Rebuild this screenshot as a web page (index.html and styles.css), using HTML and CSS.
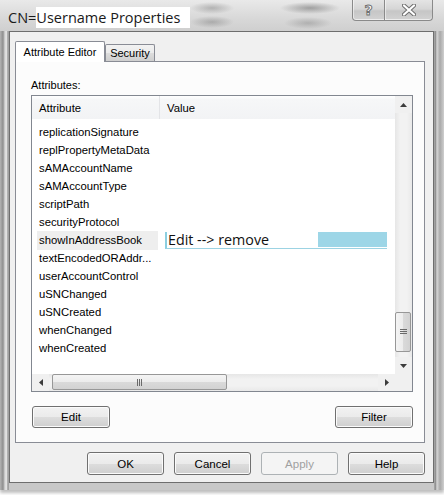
FILE: index.html
```html
<!DOCTYPE html>
<html>
<head>
<meta charset="utf-8">
<link rel="stylesheet" href="styles.css">
</head>
<body>
<div class="window">
  <div class="titlebar">
    <div class="title">CN=<span class="mask">Username Properties</span></div>
    <div class="caption">
      <div class="cbtn help"><span class="qmark">?</span></div>
      <div class="cbtn close">
        <svg width="14" height="12" viewBox="0 0 14 12"><path d="M2 1.5 L12 10.5 M12 1.5 L2 10.5" stroke="#6f6f6f" stroke-width="4.2" stroke-linecap="round"/><path d="M2 1.5 L12 10.5 M12 1.5 L2 10.5" stroke="#ffffff" stroke-width="2.2" stroke-linecap="round"/></svg>
      </div>
    </div>
  </div>
  <div class="client">
    <div class="tabs">
      <div class="tab active">Attribute Editor</div>
      <div class="tab">Security</div>
    </div>
    <div class="panel">
      <div class="label">Attributes:</div>
      <div class="listbox">
        <div class="listmain">
          <div class="cols">
            <div class="header">
              <div class="hcell h1">Attribute</div>
              <div class="hcell h2">Value</div>
            </div>
            <div class="rows">
              <div class="row"><div class="c1">replicationSignature</div></div>
              <div class="row"><div class="c1">replPropertyMetaData</div></div>
              <div class="row"><div class="c1">sAMAccountName</div></div>
              <div class="row"><div class="c1">sAMAccountType</div></div>
              <div class="row"><div class="c1">scriptPath</div></div>
              <div class="row"><div class="c1">securityProtocol</div></div>
              <div class="row"><div class="c1 sel">showInAddressBook</div>
                <div class="editor"><span class="etext">Edit --&gt; remove</span><span class="esel"></span></div>
              </div>
              <div class="row"><div class="c1">textEncodedORAddr...</div></div>
              <div class="row"><div class="c1">userAccountControl</div></div>
              <div class="row"><div class="c1">uSNChanged</div></div>
              <div class="row"><div class="c1">uSNCreated</div></div>
              <div class="row"><div class="c1">whenChanged</div></div>
              <div class="row"><div class="c1">whenCreated</div></div>
            </div>
          </div>
          <div class="vscroll">
            <div class="sbtn"><svg width="7" height="4" viewBox="0 0 7 4"><path d="M3.5 0 L7 4 L0 4 Z" fill="#3c3c3c"/></svg></div>
            <div class="vtrack"><div class="vthumb"><svg width="7" height="6" viewBox="0 0 7 6"><path d="M0 0.5H7M0 2.5H7M0 4.5H7" stroke="#6a6a6a" stroke-width="1"/></svg></div></div>
            <div class="sbtn"><svg width="7" height="4" viewBox="0 0 7 4"><path d="M0 0 L7 0 L3.5 4 Z" fill="#3c3c3c"/></svg></div>
          </div>
        </div>
        <div class="hrow">
          <div class="hscroll">
            <div class="sbtn"><svg width="4" height="7" viewBox="0 0 4 7"><path d="M4 0 L4 7 L0 3.5 Z" fill="#3c3c3c"/></svg></div>
            <div class="htrack"><div class="hthumb"><svg width="6" height="7" viewBox="0 0 6 7"><path d="M0.5 0V7M2.5 0V7M4.5 0V7" stroke="#6a6a6a" stroke-width="1"/></svg></div></div>
            <div class="sbtn"><svg width="4" height="7" viewBox="0 0 4 7"><path d="M0 0 L4 3.5 L0 7 Z" fill="#3c3c3c"/></svg></div>
          </div>
          <div class="corner"></div>
        </div>
      </div>
      <div class="panelbtns">
        <button class="btn">Edit</button>
        <button class="btn">Filter</button>
      </div>
    </div>
    <div class="dlgbtns">
      <button class="btn dbtn">OK</button>
      <button class="btn dbtn">Cancel</button>
      <button class="btn dbtn disabled">Apply</button>
      <button class="btn dbtn">Help</button>
    </div>
  </div>
</div>
</body>
</html>
```

FILE: styles.css
```css
html, body {
  margin: 0;
  padding: 0;
  background: #ffffff;
}

body {
  width: 444px;
  height: 495px;
  overflow: hidden;
  font-family: "Liberation Sans", Arial, sans-serif;
  font-size: 11px;
  color: #000;
}

.window {
  box-sizing: border-box;
  width: 444px;
  height: 490px;
  padding: 0 10px 7px 9px;
  display: flex;
  flex-direction: column;
  background:
    linear-gradient(to right, #b4b4b4 0px, #8e8e8e 3px, #d9d9d9 5px, #e4e4e4 7px, #7a7a7a 8px, #c8c8c8 9px, #c8c8c8 434px, #7c7c7c 435px, #d6d6d6 437px, #a9a9a9 440px, #cfcfcf 444px);
  box-shadow: 0 3px 3px rgba(0,0,0,0.25);
}

.titlebar {
  height: 31px;
  margin: 0 -10px 0 -9px;
  padding: 0 11px 0 8px;
  display: flex;
  align-items: flex-start;
  background:
    radial-gradient(ellipse 22px 6px at 212px 8px, rgba(90,90,90,0.35), rgba(90,90,90,0)),
    radial-gradient(ellipse 22px 6px at 212px 22px, rgba(90,90,90,0.35), rgba(90,90,90,0)),
    radial-gradient(ellipse 30px 6px at 310px 8px, rgba(60,60,60,0.4), rgba(60,60,60,0)),
    radial-gradient(ellipse 24px 6px at 308px 23px, rgba(90,90,90,0.3), rgba(90,90,90,0)),
    linear-gradient(to bottom, #e9e9e9 0%, #d8d8d8 60%, #cfcfcf 100%);
}

.title {
  margin-top: 7px;
  font-family: "Open Sans", "Noto Sans", sans-serif;
  font-size: 14.5px;
  line-height: 21px;
  color: #1a1a1a;
  white-space: nowrap;
}

.mask {
  display: inline-block;
  background: #ffffff;
  padding-right: 10px;
}

.caption {
  margin-left: auto;
  display: flex;
}

.cbtn {
  height: 20px;
  border: 1px solid #8a8a8a;
  border-top: 0;
  display: flex;
  align-items: center;
  justify-content: center;
  background: linear-gradient(to bottom, #e4e4e4 0%, #d6d6d6 45%, #c6c6c6 55%, #d2d2d2 100%);
  box-shadow: inset 0 -1px 0 rgba(255,255,255,0.6), inset 1px 0 0 rgba(255,255,255,0.5);
}

.help {
  width: 31px;
  border-radius: 0 0 0 4px;
}

.close {
  width: 47px;
  border-left: 0;
  border-radius: 0 0 4px 0;
}

.qmark {
  font-family: "DejaVu Sans", sans-serif;
  font-weight: bold;
  font-size: 14px;
  line-height: 14px;
  color: #ffffff;
  -webkit-text-stroke: 1px #707070;
}

.client {
  flex: 1;
  background: #f0f0f0;
  border: 1px solid #6e6e6e;
  padding: 9px 8px 7px 5px;
  display: flex;
  flex-direction: column;
}

.tabs {
  height: 20px;
  display: flex;
  align-items: flex-end;
}

.tab {
  box-sizing: border-box;
  height: 17px;
  width: 50px;
  border: 1px solid #898c95;
  border-bottom: 0;
  border-radius: 2px 2px 0 0;
  background: linear-gradient(to bottom, #f2f2f2 0%, #ebebeb 50%, #dddddd 51%, #cfcfcf 100%);
  display: flex;
  align-items: center;
  justify-content: center;
  font-size: 11px;
  white-space: nowrap;
}

.tab.active {
  width: 90px;
  height: 21px;
  margin-bottom: -1px;
  position: relative;
  z-index: 1;
  background: #ffffff;
}

.panel {
  box-sizing: border-box;
  height: 382px;
  border: 1px solid #898c95;
  background: #fcfcfc;
  padding: 17px 11px 14px 15px;
  display: flex;
  flex-direction: column;
}

.label {
  line-height: 13px;
  margin-bottom: 3px;
}

.listbox {
  height: 295px;
  border: 1px solid #828790;
  background: #ffffff;
  display: flex;
  flex-direction: column;
}

.listmain {
  height: 278px;
  display: flex;
}

.cols {
  flex: 1;
  display: flex;
  flex-direction: column;
}

.header {
  height: 23px;
  display: flex;
  background: linear-gradient(to bottom, #ffffff 0%, #f6f7f8 15%, #f2f3f5 100%);
}

.hcell {
  box-sizing: border-box;
  display: flex;
  align-items: center;
  padding-left: 7px;
  padding-top: 1px;
  font-size: 11.3px;
}

.h1 {
  width: 128px;
  border-right: 1px solid #e3e4e7;
}

.h2 {
  flex: 1;
}

.rows {
  padding-top: 4px;
}

.row {
  height: 18px;
  display: flex;
}

.c1 {
  box-sizing: border-box;
  width: 121px;
  margin-left: 5px;
  padding-left: 2px;
  line-height: 18px;
  font-size: 11.3px;
  white-space: nowrap;
}

.c1.sel {
  background: #eeeeee;
  height: 19px;
  line-height: 19px;
}

.editor {
  box-sizing: border-box;
  margin-left: 7px;
  margin-top: 1px;
  width: 222px;
  height: 17px;
  border-left: 2px solid #8ccfe0;
  border-bottom: 1px solid #9cd3e3;
  display: flex;
  align-items: flex-start;
  padding-left: 1px;
}

.etext {
  font-family: "Open Sans", "Noto Sans", sans-serif;
  font-size: 14.3px;
  line-height: 15px;
  color: #111;
  white-space: nowrap;
}

.esel {
  margin-left: auto;
  width: 69px;
  height: 15px;
  background: #9dd6e7;
}

.vscroll {
  width: 17px;
  display: flex;
  flex-direction: column;
  background: #f0f0f0;
}

.sbtn {
  width: 17px;
  height: 17px;
  display: flex;
  align-items: center;
  justify-content: center;
  flex: none;
}

.vtrack {
  flex: 1;
  background: linear-gradient(to right, #e6e6e6, #f2f2f2 30%, #f2f2f2 70%, #e9e9e9);
}

.vthumb {
  box-sizing: border-box;
  margin-top: 199px;
  width: 16px;
  height: 40px;
  border: 1px solid #979797;
  border-radius: 2px;
  background: linear-gradient(to right, #f4f4f4 0%, #ececec 50%, #dadada 51%, #d2d2d2 100%);
  display: flex;
  align-items: center;
  justify-content: center;
}

.hrow {
  height: 17px;
  display: flex;
}

.hscroll {
  flex: 1;
  display: flex;
  background: #f0f0f0;
}

.htrack {
  flex: 1;
  background: linear-gradient(to bottom, #e6e6e6, #f2f2f2 30%, #f2f2f2 70%, #e9e9e9);
}

.hthumb {
  box-sizing: border-box;
  margin-left: 3px;
  width: 175px;
  height: 16px;
  border: 1px solid #979797;
  border-radius: 2px;
  background: linear-gradient(to bottom, #f4f4f4 0%, #ececec 50%, #dadada 51%, #d2d2d2 100%);
  display: flex;
  align-items: center;
  justify-content: center;
}

.corner {
  width: 17px;
  background: #f0f0f0;
}

.panelbtns {
  margin-top: 14px;
  padding: 0 0 0 1px;
  display: flex;
  justify-content: space-between;
}

.btn {
  box-sizing: border-box;
  width: 78px;
  height: 22px;
  margin: 0;
  padding: 0;
  border: 1px solid #707070;
  border-radius: 3px;
  background: linear-gradient(to bottom, #f2f2f2 0%, #ebebeb 50%, #dddddd 51%, #cfcfcf 100%);
  box-shadow: inset 0 0 0 1px #fbfbfb;
  font-family: "Liberation Sans", Arial, sans-serif;
  font-size: 11.5px;
  color: #000;
}

.dlgbtns {
  margin-top: 9px;
  display: flex;
  justify-content: flex-end;
  gap: 10px;
}

.dbtn {
  width: 77px;
  height: 23px;
}

.btn.disabled {
  border-color: #adb2b5;
  background: #f4f4f4;
  box-shadow: none;
  color: #a0a0a0;
}
```
